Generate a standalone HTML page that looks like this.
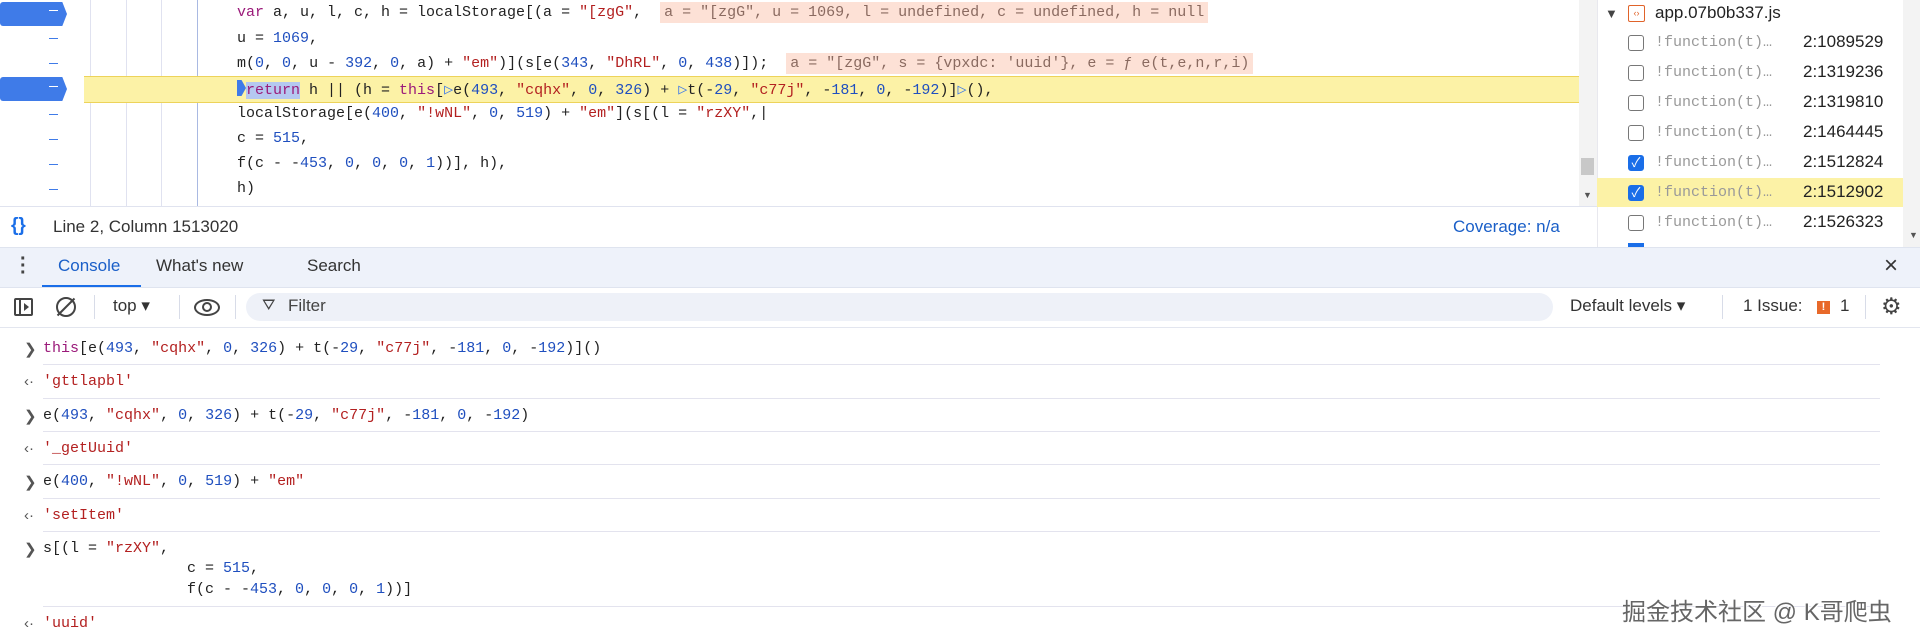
<!DOCTYPE html>
<html><head><meta charset="utf-8"><style>
*{margin:0;padding:0;box-sizing:border-box}
body{width:1920px;height:638px;overflow:hidden;background:#fff;position:relative;font-family:"Liberation Sans","Noto Sans CJK SC",sans-serif;color:#1f1f1f}
.a{position:absolute;white-space:pre}
.m{font-family:"Liberation Mono",monospace;font-size:15px}
.k{color:#9b1a7a}.s{color:#b32020}.n{color:#1f4fbf}.p{color:#222}
.vl{position:absolute;top:0;height:206px;width:1px;background:#e0e2f0}
.bp{position:absolute;left:0;width:67px;height:24px;background:#3f7be8;clip-path:polygon(0 0,93% 0,100% 50%,93% 100%,0 100%);border-radius:3px}
.dash{position:absolute;left:49px;width:9px;height:1px;background:#3f7be8}
.cb{position:absolute;left:1628px;width:16px;height:16px;border:1.5px solid #777;border-radius:3px;background:#fff}
.cb.on{background:#1a6ee8;border-color:#1a6ee8}
.fn{position:absolute;left:1655px;font-family:"Liberation Mono",monospace;font-size:15px;color:#999}
.ln{position:absolute;left:1803px;font-size:17px;color:#222}
.sep{position:absolute;left:43px;right:40px;height:1px;background:#e3e3ee}
.pr{position:absolute;left:24px;font-size:15px;color:#555}
</style></head><body>
<!-- code area -->
<div class="vl" style="left:90px"></div><div class="vl" style="left:126px"></div><div class="vl" style="left:161px"></div><div class="vl" style="left:197px;background:#a9b9e2"></div>
<div class="a" style="left:84px;top:76px;width:1495px;height:27px;background:#fcf2a6;border-top:1px solid #edd35a;border-bottom:1px solid #edd35a"></div>
<div class="bp" style="top:2px"></div><div class="bp" style="top:77px"></div>
<div class="dash" style="top:10px;background:#fff"></div>
<div class="dash" style="top:38px"></div><div class="dash" style="top:63px"></div>
<div class="dash" style="top:86px;background:#fff"></div>
<div class="dash" style="top:114px"></div><div class="dash" style="top:139px"></div><div class="dash" style="top:164px"></div><div class="dash" style="top:189px"></div>
<div class="a m p" style="left:237px;top:4px"><span class="k">var</span> a, u, l, c, h = localStorage[(a = <span class="s">"[zgG"</span>,  <span style="background:#fde1d6;color:#8a6a60;padding:2px 4px">a = "[zgG", u = 1069, l = undefined, c = undefined, h = null</span></div>
<div class="a m p" style="left:237px;top:30px">u = <span class="n">1069</span>,</div>
<div class="a m p" style="left:237px;top:55px">m(<span class="n">0</span>, <span class="n">0</span>, u - <span class="n">392</span>, <span class="n">0</span>, a) + <span class="s">"em"</span>)](s[e(<span class="n">343</span>, <span class="s">"DhRL"</span>, <span class="n">0</span>, <span class="n">438</span>)]);  <span style="background:#fde1d6;color:#8a6a60;padding:2px 4px">a = "[zgG", s = {vpxdc: 'uuid'}, e = ƒ e(t,e,n,r,i)</span></div>
<div class="a m p" style="left:237px;top:80px"><span style="display:inline-block;width:9px;height:16px;background:#3f7be8;clip-path:polygon(0 0,50% 0,100% 50%,50% 100%,0 100%);vertical-align:-2px"></span><span class="k" style="background:#b5c8f0">return</span> h || (h = <span class="k">this</span>[<span style="color:#3f7be8">▷</span>e(<span class="n">493</span>, <span class="s">"cqhx"</span>, <span class="n">0</span>, <span class="n">326</span>) + <span style="color:#3f7be8">▷</span>t(-<span class="n">29</span>, <span class="s">"c77j"</span>, -<span class="n">181</span>, <span class="n">0</span>, -<span class="n">192</span>)]<span style="color:#3f7be8">▷</span>(),</div>
<div class="a m p" style="left:237px;top:105px">localStorage[e(<span class="n">400</span>, <span class="s">"!wNL"</span>, <span class="n">0</span>, <span class="n">519</span>) + <span class="s">"em"</span>](s[(l = <span class="s">"rzXY"</span>,|</div>
<div class="a m p" style="left:237px;top:130px">c = <span class="n">515</span>,</div>
<div class="a m p" style="left:237px;top:155px">f(c - -<span class="n">453</span>, <span class="n">0</span>, <span class="n">0</span>, <span class="n">0</span>, <span class="n">1</span>))], h),</div>
<div class="a m p" style="left:237px;top:180px">h)</div>
<!-- scrollbar -->
<div class="a" style="left:1579px;top:0;width:18px;height:206px;background:#f3f3f3"></div>
<div class="a" style="left:1581px;top:158px;width:13px;height:17px;background:#c8c8c8"></div>
<div class="a" style="left:1583px;top:190px;font-size:9px;color:#555">▼</div>
<div class="a" style="left:0;top:206px;width:1597px;height:1px;background:#e0e3ef"></div>
<!-- status -->
<div class="a" style="left:11px;top:215px;font-size:19px;font-weight:bold;color:#1a6ee8">{}</div>
<div class="a" style="left:53px;top:217px;font-size:17px;color:#333">Line 2, Column 1513020</div>
<div class="a" style="left:1453px;top:217px;font-size:17px;color:#1a5fc8">Coverage: n/a</div>
<!-- right panel -->
<div class="a" style="left:1597px;top:0;width:1px;height:247px;background:#e8e8ee"></div>
<div class="a" style="left:1903px;top:0;width:17px;height:247px;background:#f3f3f3"></div>
<div class="a" style="left:1909px;top:230px;font-size:9px;color:#555">▼</div>
<div class="a" style="left:1605px;top:6px;font-size:13px;color:#444">▼</div>
<div class="a" style="left:1628px;top:5px;width:17px;height:17px;border:1.5px solid #e0632a;border-radius:2px;font-size:9px;color:#e0632a;text-align:center;line-height:14px">‹›</div>
<div class="a" style="left:1655px;top:3px;font-size:17px;color:#222">app.07b0b337.js</div>
<div class="a" style="left:1597px;top:178px;width:306px;height:29px;background:#fcf2a6"></div>
<div class="cb" style="top:35px"></div><div class="fn" style="top:34px">!function(t)…</div><div class="ln" style="top:32px">2:1089529</div>
<div class="cb" style="top:65px"></div><div class="fn" style="top:64px">!function(t)…</div><div class="ln" style="top:62px">2:1319236</div>
<div class="cb" style="top:95px"></div><div class="fn" style="top:94px">!function(t)…</div><div class="ln" style="top:92px">2:1319810</div>
<div class="cb" style="top:125px"></div><div class="fn" style="top:124px">!function(t)…</div><div class="ln" style="top:122px">2:1464445</div>
<div class="cb on" style="top:155px;color:#fff;font-size:13px;line-height:13px;text-align:center">✓</div><div class="fn" style="top:154px">!function(t)…</div><div class="ln" style="top:152px">2:1512824</div>
<div class="cb on" style="top:185px;color:#fff;font-size:13px;line-height:13px;text-align:center">✓</div><div class="fn" style="top:184px">!function(t)…</div><div class="ln" style="top:182px">2:1512902</div>
<div class="cb" style="top:215px"></div><div class="fn" style="top:214px">!function(t)…</div><div class="ln" style="top:212px">2:1526323</div>
<div class="a" style="left:1628px;top:243px;width:16px;height:4px;background:#1a6ee8"></div>
<!-- tab bar -->
<div class="a" style="left:0;top:247px;width:1920px;height:40px;background:#eef2fa;border-top:1px solid #dfe4ef"></div>
<div class="a" style="left:20px;top:256px;font-size:20px;font-weight:bold;color:#444;line-height:7px">·<br>·<br>·</div>
<div class="a" style="left:58px;top:256px;font-size:17px;color:#1a5fc8">Console</div>
<div class="a" style="left:42px;top:285px;width:99px;height:3px;background:#1a6ee8"></div>
<div class="a" style="left:156px;top:256px;font-size:17px;color:#333">What's new</div>
<div class="a" style="left:307px;top:256px;font-size:17px;color:#333">Search</div>
<div class="a" style="left:1884px;top:252px;font-size:24px;color:#333">×</div>
<!-- toolbar -->
<div class="a" style="left:0;top:287px;width:1920px;height:1px;background:#dfe4ef"></div>
<div class="a" style="left:14px;top:298px;width:19px;height:18px;border:2px solid #444;border-radius:2px"></div>
<div class="a" style="left:19px;top:298px;width:2px;height:18px;background:#444"></div>
<div class="a" style="left:24px;top:303px;width:0;height:0;border-left:5px solid #444;border-top:4px solid transparent;border-bottom:4px solid transparent"></div>
<div class="a" style="left:56px;top:297px;width:20px;height:20px;border:2px solid #444;border-radius:50%"></div>
<div class="a" style="left:65px;top:295px;width:2px;height:24px;background:#444;transform:rotate(45deg)"></div>
<div class="a" style="left:94px;top:295px;width:1px;height:24px;background:#d8dce8"></div>
<div class="a" style="left:113px;top:296px;font-size:17px;color:#333">top ▾</div>
<div class="a" style="left:179px;top:295px;width:1px;height:24px;background:#d8dce8"></div>
<div class="a" style="left:194px;top:299px;width:26px;height:17px;border:2px solid #444;border-radius:50%"></div>
<div class="a" style="left:202px;top:302px;width:10px;height:10px;border:2px solid #444;border-radius:50%"></div>
<div class="a" style="left:235px;top:295px;width:1px;height:24px;background:#d8dce8"></div>
<div class="a" style="left:246px;top:293px;width:1307px;height:28px;background:#eef1f8;border-radius:14px"></div>
<div class="a" style="left:262px;top:297px;font-size:16px;color:#444">⛛</div>
<div class="a" style="left:288px;top:296px;font-size:17px;color:#444">Filter</div>
<div class="a" style="left:1570px;top:296px;font-size:17px;color:#333">Default levels ▾</div>
<div class="a" style="left:1722px;top:295px;width:1px;height:24px;background:#d8dce8"></div>
<div class="a" style="left:1743px;top:296px;font-size:17px;color:#333">1 Issue:</div>
<div class="a" style="left:1817px;top:301px;width:13px;height:13px;background:#e8692a;color:#fff;font-size:11px;font-weight:bold;text-align:center;line-height:13px">!</div>
<div class="a" style="left:1840px;top:296px;font-size:17px;color:#333">1</div>
<div class="a" style="left:1865px;top:295px;width:1px;height:24px;background:#d8dce8"></div>
<div class="a" style="left:1881px;top:293px;font-size:23px;color:#444">⚙</div>
<div class="a" style="left:0;top:327px;width:1920px;height:1px;background:#e3e6ef"></div>
<!-- console -->
<div class="pr" style="top:340px">❯</div>
<div class="a m p" style="left:43px;top:340px"><span class="k">this</span>[e(<span class="n">493</span>, <span class="s">"cqhx"</span>, <span class="n">0</span>, <span class="n">326</span>) + t(-<span class="n">29</span>, <span class="s">"c77j"</span>, -<span class="n">181</span>, <span class="n">0</span>, -<span class="n">192</span>)]()</div>
<div class="sep" style="top:364px"></div>
<div class="pr" style="top:373px">‹·</div>
<div class="a m s" style="left:43px;top:373px">'gttlapbl'</div>
<div class="sep" style="top:398px"></div>
<div class="pr" style="top:407px">❯</div>
<div class="a m p" style="left:43px;top:407px">e(<span class="n">493</span>, <span class="s">"cqhx"</span>, <span class="n">0</span>, <span class="n">326</span>) + t(-<span class="n">29</span>, <span class="s">"c77j"</span>, -<span class="n">181</span>, <span class="n">0</span>, -<span class="n">192</span>)</div>
<div class="sep" style="top:431px"></div>
<div class="pr" style="top:440px">‹·</div>
<div class="a m s" style="left:43px;top:440px">'_getUuid'</div>
<div class="sep" style="top:464px"></div>
<div class="pr" style="top:473px">❯</div>
<div class="a m p" style="left:43px;top:473px">e(<span class="n">400</span>, <span class="s">"!wNL"</span>, <span class="n">0</span>, <span class="n">519</span>) + <span class="s">"em"</span></div>
<div class="sep" style="top:498px"></div>
<div class="pr" style="top:507px">‹·</div>
<div class="a m s" style="left:43px;top:507px">'setItem'</div>
<div class="sep" style="top:531px"></div>
<div class="pr" style="top:540px">❯</div>
<div class="a m p" style="left:43px;top:540px">s[(l = <span class="s">"rzXY"</span>,</div>
<div class="a m p" style="left:187px;top:560px">c = <span class="n">515</span>,</div>
<div class="a m p" style="left:187px;top:581px">f(c - -<span class="n">453</span>, <span class="n">0</span>, <span class="n">0</span>, <span class="n">0</span>, <span class="n">1</span>))]</div>
<div class="sep" style="top:606px"></div>
<div class="pr" style="top:615px">‹·</div>
<div class="a m s" style="left:43px;top:615px">'uuid'</div>
<div class="a" style="left:1622px;top:592px;font-size:24px;color:#666;text-shadow:1px 1px 0 #fff,-1px -1px 0 #fff">掘金技术社区 @ K哥爬虫</div>
</body></html>
